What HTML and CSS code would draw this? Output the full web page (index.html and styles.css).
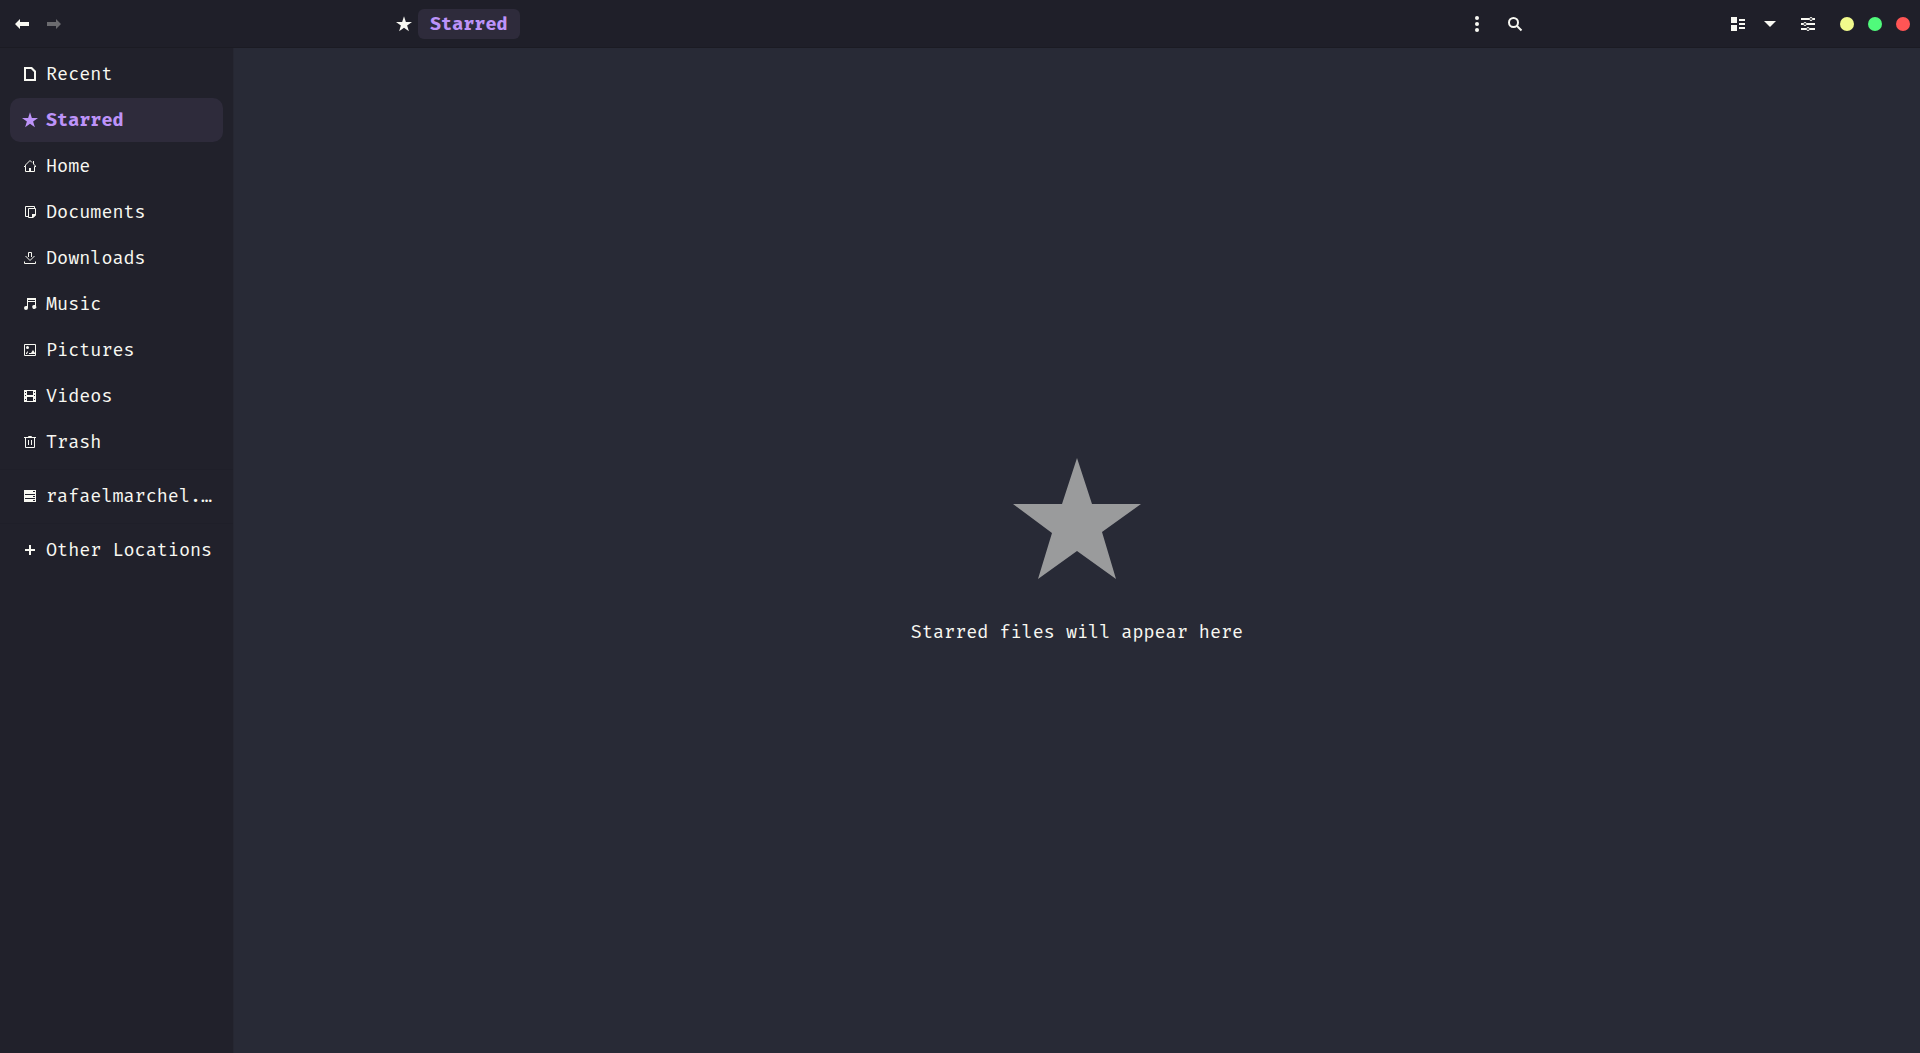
FILE: index.html
```html
<!DOCTYPE html>
<html lang="en">
<head>
<meta charset="utf-8">
<meta name="viewport" content="width=device-width, initial-scale=1">
<title>Starred</title>
<link rel="stylesheet" href="styles.css">
</head>
<body>
<svg class="sprite" aria-hidden="true">
  <symbol id="star" viewBox="0 0 128 128"><path d="M64 1 79 47 128 47 89 75 103 122 64 94 25 122 39 76 0 47 49 47Z"/></symbol>
</svg>
<header class="titlebar">
  <nav class="history" aria-label="History">
    <button class="tool" type="button" aria-label="Back"><svg class="icon" viewBox="0 0 16 16"><path d="M1 8 6 3V6H15V10H6V13Z"/></svg></button>
    <button class="tool" type="button" aria-label="Forward" disabled><svg class="icon" viewBox="0 0 16 16"><path d="M15 8 10 3V6H1V10H10V13Z"/></svg></button>
  </nav>
  <div class="location">
    <svg class="icon" aria-hidden="true"><use href="#star"/></svg>
    <button class="crumb" type="button">Starred</button>
    <div class="location-tools">
      <button class="tool" type="button" aria-label="Folder menu"><svg class="icon" viewBox="0 0 16 16"><circle cx="8" cy="2" r="2"/><circle cx="8" cy="8" r="2"/><circle cx="8" cy="14" r="2"/></svg></button>
      <button class="tool" type="button" aria-label="Search"><svg class="icon" viewBox="0 0 16 16"><circle class="line thick" cx="6.5" cy="6.5" r="4.5"/><path class="line thick" d="M10 10 14.5 14.5"/></svg></button>
    </div>
  </div>
  <div class="window-tools">
    <button class="tool" type="button" aria-label="Toggle view"><svg class="icon" viewBox="0 0 16 16"><path d="M1 1H7V7H1ZM1 9H7V15H1ZM9 3H15V5H9ZM9 7H15V9H9ZM9 11H15V13H9Z"/></svg></button>
    <button class="tool" type="button" aria-label="View options"><svg class="icon" viewBox="0 0 16 16"><path d="M2 5H14L8 11Z"/></svg></button>
    <button class="tool menu" type="button" aria-label="Main menu"><svg class="icon" viewBox="0 0 16 16"><path d="M1 2H9V4H1ZM13 2H15V4H13ZM1 7H3V9H1ZM7 7H15V9H7ZM1 12H6V14H1ZM10 12H15V14H10Z"/><g class="line"><circle cx="11" cy="3" r="1.5"/><circle cx="5" cy="8" r="1.5"/><circle cx="8" cy="13" r="1.5"/></g></svg></button>
    <div class="controls">
      <button class="control minimize" type="button" aria-label="Minimize"></button>
      <button class="control maximize" type="button" aria-label="Maximize"></button>
      <button class="control close" type="button" aria-label="Close"></button>
    </div>
  </div>
</header>
<div class="body">
  <nav class="sidebar" aria-label="Places">
    <ul class="places">
      <li><a class="place" href="#"><svg class="icon" viewBox="0 0 16 16"><path fill-rule="evenodd" d="M2 1H10L14 5V15H2ZM4 3V13H12V6L9 3Z"/></svg><span class="name">Recent</span></a></li>
      <li><a class="place active" href="#" aria-current="page"><svg class="icon"><use href="#star"/></svg><span class="name">Starred</span></a></li>
      <li><a class="place" href="#"><svg class="icon" viewBox="0 0 16 16"><path class="line" d="M2 8.5H3.5V13.5H12.5V8.5H14M3.5 8.5V7L8 2.5 10 4.5M11.5 3V6L13.5 8"/><path d="M7 10H9V14H7Z"/></svg><span class="name">Home</span></a></li>
      <li><a class="place" href="#"><svg class="icon" viewBox="0 0 16 16"><path class="line" d="M6 12.5H3.5V2.5H12.5V4M6.5 4.5H13.5V11L11 13.5H6.5Z"/><path d="M10 10H14V11L11 14H10Z"/></svg><span class="name">Documents</span></a></li>
      <li><a class="place" href="#"><svg class="icon" viewBox="0 0 16 16"><path class="line" d="M2.5 11.5V13.5H13.5V11.5M6.5 7V2.5H9.5V7M3.5 6 8 10.5 12.5 6"/></svg><span class="name">Downloads</span></a></li>
      <li><a class="place" href="#"><svg class="icon" viewBox="0 0 16 16"><path d="M5 2H14V10A2 2 0 1 1 12 9H13V6H6V12A2 2 0 1 1 4 10H5ZM6 4V5H13V4Z" fill-rule="evenodd"/></svg><span class="name">Music</span></a></li>
      <li><a class="place" href="#"><svg class="icon" viewBox="0 0 16 16"><path class="line" d="M2.5 2.5H13.5V13.5H2.5Z"/><circle cx="5.5" cy="5.5" r="1.5"/><path d="M4 12V11L6 9V10L5 12ZM7 12V11H9L11 8 13 11V12Z"/></svg><span class="name">Pictures</span></a></li>
      <li><a class="place" href="#"><svg class="icon" viewBox="0 0 16 16"><path fill-rule="evenodd" d="M2 2H14V14H2ZM5 3V7H11V3ZM5 9V13H11V9ZM3 4V5H4V4ZM3 7V8H4V7ZM3 11V12H4V11ZM12 4V5H13V4ZM12 7V8H13V7ZM12 11V12H13V11Z"/></svg><span class="name">Videos</span></a></li>
      <li><a class="place" href="#"><svg class="icon" viewBox="0 0 16 16"><path class="line" d="M2 3.5H14M3.5 4V13.5H12.5V4M6.5 3V2.5H9.5V3M6.5 6V11M9.5 6V11"/></svg><span class="name">Trash</span></a></li>
    </ul>
    <ul class="places">
      <li><a class="place" href="#"><svg class="icon" viewBox="0 0 16 16"><path fill-rule="evenodd" d="M2 2H14V14H2ZM3 6V7H13V6ZM3 10V11H13V10ZM11 3V4H13V3ZM11 8V9H13V8ZM11 12V13H13V12Z"/></svg><span class="name">rafaelmarchel.…</span></a></li>
    </ul>
    <ul class="places">
      <li><a class="place" href="#"><svg class="icon" viewBox="0 0 16 16"><path d="M7 3H9V7H13V9H9V13H7V9H3V7H7Z"/></svg><span class="name">Other Locations</span></a></li>
    </ul>
  </nav>
  <main class="content">
    <svg class="big-star" aria-hidden="true"><use href="#star"/></svg>
    <p class="message">Starred files will appear here</p>
  </main>
</div>
</body>
</html>
```
FILE: styles.css
```css
* { box-sizing: border-box; }

body {
  margin: 0;
  min-height: 100vh;
  display: flex;
  flex-direction: column;
  background: #282a36;
  color: #f8f8f2;
  font: 18px/24px "Fira Code", "Fira Mono", "DejaVu Sans Mono", monospace;
}

button {
  padding: 0;
  border: 0;
  background: none;
  color: inherit;
  font: inherit;
}

.sprite { display: none; }

.icon {
  display: block;
  flex: none;
  width: 16px;
  height: 16px;
  fill: currentColor;
}

.line {
  fill: none;
  stroke: currentColor;
  stroke-width: 1;
}

.thick { stroke-width: 2; }

.titlebar {
  display: grid;
  grid-template-columns: 1fr 60% 1fr;
  align-items: center;
  height: 48px;
  background: #1f1f29;
  border-bottom: 1px solid #1b1b23;
}

.history,
.location,
.location-tools,
.window-tools,
.controls {
  display: flex;
  align-items: center;
}

.history { padding-left: 6px; }

.tool {
  display: grid;
  place-items: center;
  width: 32px;
  height: 32px;
}

.tool:disabled { opacity: 0.35; }

.location {
  gap: 6px;
  padding: 0 5px 0 12px;
}

.crumb {
  height: 30px;
  padding: 2px 12px 0;
  border-radius: 6px;
  background: #2e2b3b;
  color: #bd93f9;
  font-weight: bold;
}

.location-tools {
  margin-left: auto;
  gap: 6px;
}

.window-tools {
  justify-content: flex-end;
  padding-right: 10px;
}

.menu { margin-left: 6px; }

.controls {
  gap: 14px;
  margin-left: 16px;
}

.control {
  width: 14px;
  height: 14px;
  border-radius: 50%;
}

.minimize { background: #f1fa8c; }
.maximize { background: #50fa7b; }
.close { background: #ff5555; }

.body {
  display: flex;
  flex: 1;
}

.sidebar {
  flex: none;
  width: 234px;
  background: #21212b;
  border-right: 1px solid #262732;
}

.places {
  display: grid;
  gap: 2px;
  margin: 0;
  padding: 4px 10px 5px;
  list-style: none;
}

.places + .places { border-top: 1px solid #1f1f29; }

.place {
  display: flex;
  align-items: center;
  gap: 8px;
  height: 44px;
  padding: 0 12px;
  border-radius: 10px;
  color: inherit;
  text-decoration: none;
}

.place.active {
  background: #2e2b3b;
  color: #bd93f9;
  font-weight: bold;
}

.name {
  padding-top: 2px;
  white-space: nowrap;
}

.content {
  flex: 1;
  display: flex;
  flex-direction: column;
  align-items: center;
  justify-content: center;
  gap: 36px;
}

.big-star {
  width: 128px;
  height: 128px;
  fill: #9a9b9c;
}

.message { margin: 0; }
```
